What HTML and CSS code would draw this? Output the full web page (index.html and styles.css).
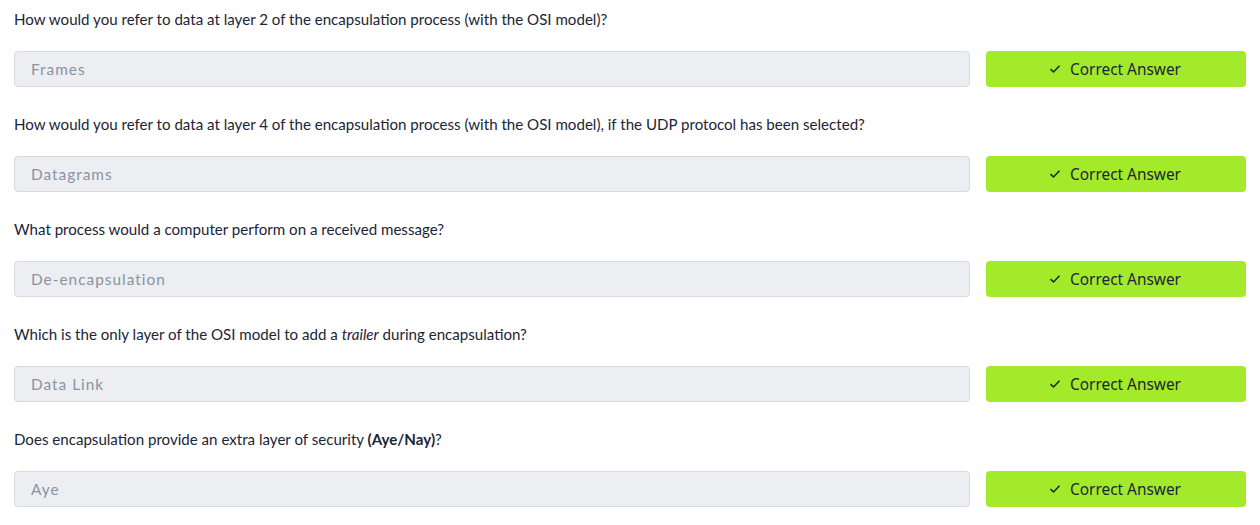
FILE: index.html
```html
<!DOCTYPE html>
<html>
<head>
<meta charset="utf-8">
<link rel="stylesheet" href="styles.css">
</head>
<body>
<div class="list">
  <div class="task">
    <p class="question">How would you refer to data at layer 2 of the encapsulation process (with the OSI model)?</p>
    <div class="answer-row">
      <div class="answer">Frames</div>
      <button class="btn"><svg class="check" viewBox="0 0 12 10" width="12" height="10"><path d="M1.5 5.2 L4.5 8 L10.5 1.8" fill="none" stroke="#1c2538" stroke-width="1.6"/></svg>Correct Answer</button>
    </div>
  </div>
  <div class="task">
    <p class="question">How would you refer to data at layer 4 of the encapsulation process (with the OSI model), if the UDP protocol has been selected?</p>
    <div class="answer-row">
      <div class="answer">Datagrams</div>
      <button class="btn"><svg class="check" viewBox="0 0 12 10" width="12" height="10"><path d="M1.5 5.2 L4.5 8 L10.5 1.8" fill="none" stroke="#1c2538" stroke-width="1.6"/></svg>Correct Answer</button>
    </div>
  </div>
  <div class="task">
    <p class="question">What process would a computer perform on a received message?</p>
    <div class="answer-row">
      <div class="answer">De-encapsulation</div>
      <button class="btn"><svg class="check" viewBox="0 0 12 10" width="12" height="10"><path d="M1.5 5.2 L4.5 8 L10.5 1.8" fill="none" stroke="#1c2538" stroke-width="1.6"/></svg>Correct Answer</button>
    </div>
  </div>
  <div class="task">
    <p class="question">Which is the only layer of the OSI model to add a <em>trailer</em> during encapsulation?</p>
    <div class="answer-row">
      <div class="answer">Data Link</div>
      <button class="btn"><svg class="check" viewBox="0 0 12 10" width="12" height="10"><path d="M1.5 5.2 L4.5 8 L10.5 1.8" fill="none" stroke="#1c2538" stroke-width="1.6"/></svg>Correct Answer</button>
    </div>
  </div>
  <div class="task">
    <p class="question">Does encapsulation provide an extra layer of security <strong>(Aye/Nay)</strong>?</p>
    <div class="answer-row">
      <div class="answer">Aye</div>
      <button class="btn"><svg class="check" viewBox="0 0 12 10" width="12" height="10"><path d="M1.5 5.2 L4.5 8 L10.5 1.8" fill="none" stroke="#1c2538" stroke-width="1.6"/></svg>Correct Answer</button>
    </div>
  </div>
</div>
</body>
</html>
```
FILE: styles.css
```css
html, body {
  margin: 0;
  padding: 0;
  background: #ffffff;
}
body {
  font-family: "Lato", "Liberation Sans", sans-serif;
  color: #1c2538;
}
.list {
  display: flex;
  flex-direction: column;
  gap: 25px;
  padding: 7px 14px 0 14px;
}
.task {
  display: flex;
  flex-direction: column;
  gap: 20px;
}
.question {
  margin: 0;
  font-size: 15.1px;
  line-height: 24px;
}
.question strong {
  font-weight: 700;
}
.answer-row {
  display: flex;
  gap: 16px;
}
.answer {
  flex: 1;
  height: 36px;
  box-sizing: border-box;
  background: #eceef2;
  border: 1px solid #d6d9de;
  border-radius: 4px;
  padding: 0 16px;
  display: flex;
  align-items: center;
  font-size: 15.4px;
  letter-spacing: 1px;
  color: #8b93a0;
}
.btn {
  width: 260px;
  height: 36px;
  border: none;
  border-radius: 4px;
  background: #a3ea2a;
  color: #1c2538;
  font-family: "Noto Sans", "DejaVu Sans", sans-serif;
  font-size: 15.4px;
  display: flex;
  align-items: center;
  justify-content: center;
  gap: 9px;
  padding: 0 2px 0 0;
}
.check {
  display: block;
}
```
